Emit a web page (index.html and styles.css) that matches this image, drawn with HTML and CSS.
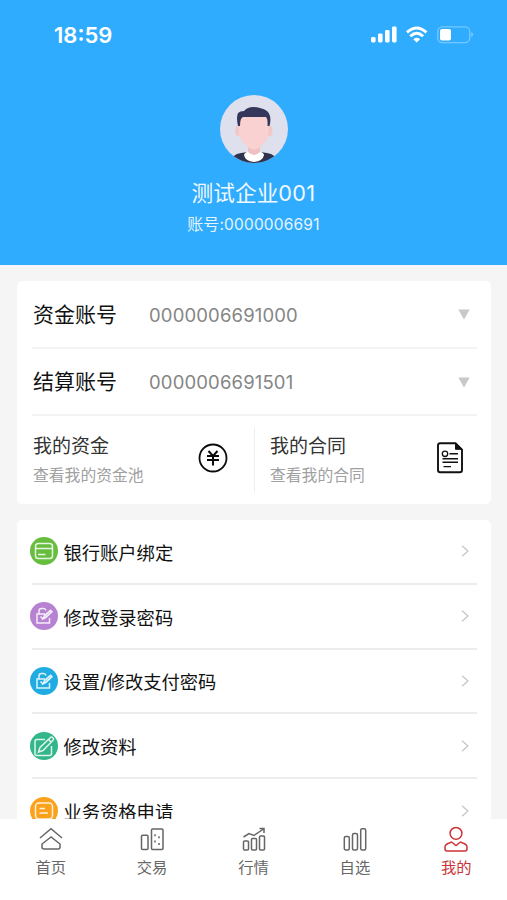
FILE: index.html
```html
<!DOCTYPE html>
<html lang="zh-CN">
<head>
<meta charset="utf-8">
<meta name="viewport" content="width=device-width, initial-scale=1">
<title>我的</title>
<link rel="stylesheet" href="styles.css">
</head>
<body>
<div class="app">
  <header class="profile">
    <div class="status">
      <span class="time">18:59</span>
      <svg class="status-icons" width="104" height="20" viewBox="0 0 104 20">
        <g fill="#fff">
          <rect x="1" y="12" width="4.6" height="5.500" rx="1.4"/>
          <rect x="8" y="8.500" width="4.6" height="9" rx="1.4"/>
          <rect x="15" y="5" width="4.6" height="12.5" rx="1.4"/>
          <rect x="22" y="1.500" width="4.6" height="16" rx="1.4"/>
          <path d="M46.700 17.500 L43.300 14.200 Q46.700 11.300 50.100 14.200 Z"/>
          <rect x="70" y="4" width="11" height="11.500" rx="2"/>
        </g>
        <g fill="none" stroke="#fff" stroke-width="2.900">
          <path d="M37 7.300 Q46.700 -1.200 56.400 7.300"/>
          <path d="M40.300 11.200 Q46.700 5.300 53.100 11.200"/>
        </g>
        <rect x="67.700" y="1.800" width="32" height="15.800" rx="4.500" fill="none" stroke="#74c7ff" stroke-width="1.300"/>
        <path d="M101.300 7 Q104.800 9.600 101.300 12.200 Z" fill="#83cdff"/>
      </svg>
    </div>
    <svg class="avatar" width="68" height="68" viewBox="0 0 68 68">
      <defs><clipPath id="face"><circle cx="34" cy="34" r="34"/></clipPath></defs>
      <g clip-path="url(#face)">
        <rect width="68" height="68" fill="#dfe0ee"/>
        <path d="M10 70 Q11 59 21 58 L28 57 L40 57 L47 58 Q57 59 58 70 Z" fill="#303350"/>
        <path d="M24 60 Q24 58 29 56 L39 56 Q44 58 44 60 Q43 66 34 67 Q25 66 24 60 Z" fill="#fff"/>
        <path d="M28 49 H40 V57 Q34 63 28 57 Z" fill="#f0bfc2"/>
        <ellipse cx="18" cy="36" rx="3" ry="5.500" fill="#f2c7c9"/>
        <ellipse cx="49.500" cy="36" rx="3" ry="5.500" fill="#f2c7c9"/>
        <path d="M19 20 H48.500 V38 Q48 45 42 50 Q34 59 26 50 Q19 45 19 38 Z" fill="#f9d1d1"/>
        <path d="M18 31 Q16 22 18 18 Q20 16 24 16 Q29 10 40 13 Q49 15 50 21 Q51 26 49.500 31 L47.500 31 Q48 24 46 22 H23 Q20 23 20 31 Z" fill="#34375a"/>
      </g>
    </svg>
    <h1 class="name">测试企业<span class="name-no">001</span></h1>
    <p class="account">账号<span class="account-no">:0000006691</span></p>
  </header>

  <main class="content">
    <section class="card">
      <div class="select-row">
        <span class="label">资金账号</span>
        <span class="value">0000006691000</span>
        <svg class="caret" width="12" height="11" viewBox="0 0 12 11"><path d="M.3.500H11.700L6 10.500Z"/></svg>
      </div>
      <div class="select-row">
        <span class="label">结算账号</span>
        <span class="value">0000006691501</span>
        <svg class="caret" width="12" height="11" viewBox="0 0 12 11"><path d="M.3.500H11.700L6 10.500Z"/></svg>
      </div>
      <div class="shortcuts">
        <div class="shortcut">
          <div><div class="title">我的资金</div><div class="hint">查看我的资金池</div></div>
          <svg width="30" height="30" viewBox="0 0 30 30" fill="none" stroke="#0b0b0b">
            <circle cx="15" cy="15" r="13.500" stroke-width="1.800"/>
            <path d="M10.500 8 L15 13 L19.500 8 M9 13 H21 M9 17 H21 M15 13 V22.500" stroke-width="2"/>
          </svg>
        </div>
        <div class="shortcut">
          <div><div class="title">我的合同</div><div class="hint">查看我的合同</div></div>
          <svg width="26" height="32" viewBox="0 0 26 32" fill="none" stroke="#111">
            <path d="M18.500 1.200 H3.200 Q1 1.200 1 3.400 V28 Q1 30.300 3.200 30.300 H22.700 Q25 30.300 25 28 V7.700 Z" stroke-width="1.900"/>
            <path d="M18.500 1.200 V7.300 H25 Z" fill="#111"/>
            <circle cx="8" cy="11.800" r="2.700" stroke-width="1.300"/>
            <path d="M12.500 11.800 H21 M5.500 16.800 H21 M5.500 20.300 H21 M6.500 24.600 H14" stroke-width="1.400"/>
          </svg>
        </div>
      </div>
    </section>

    <section class="card menu">
      <div class="item">
        <svg class="badge green" viewBox="0 0 28 28"><rect x="5.500" y="6.500" width="17" height="15" rx="2.800"/><path d="M5.500 11.500H22.500M8 17.500H15.500"/></svg>
        <span>银行账户绑定</span>
        <svg class="arrow" viewBox="0 0 8 12"><path d="M1 .7L7 6L1 11.300"/></svg>
      </div>
      <div class="item">
        <svg class="badge purple" viewBox="0 0 28 28"><path d="M15 12H7V21H19.500V16M9 12V9Q9 6.500 11.500 6.500H13.500Q15.500 6.500 16 8.500M10.500 14.500L13 17"/><path d="M13 17L14.500 13.500L20.500 8.200L22 9.700L16 15.500Z" fill="#fff" fill-opacity=".5"/></svg>
        <span>修改登录密码</span>
        <svg class="arrow" viewBox="0 0 8 12"><path d="M1 .7L7 6L1 11.300"/></svg>
      </div>
      <div class="item">
        <svg class="badge blue" viewBox="0 0 28 28"><path d="M15 12H7V21H19.500V16M9 12V9Q9 6.500 11.500 6.500H13.500Q15.500 6.500 16 8.500M10.500 14.500L13 17"/><path d="M13 17L14.500 13.500L20.500 8.200L22 9.700L16 15.500Z" fill="#fff" fill-opacity=".5"/></svg>
        <span>设置/修改支付密码</span>
        <svg class="arrow" viewBox="0 0 8 12"><path d="M1 .7L7 6L1 11.300"/></svg>
      </div>
      <div class="item">
        <svg class="badge teal" viewBox="0 0 28 28"><path d="M15 7.500H7Q5 7.500 5 9.500V21.500Q5 23.500 7 23.500H19.500Q21.500 23.500 21.500 21.500V14M8.500 20L10 15.500L20.500 5.500Q21.500 4.500 22.500 5.500L23.300 6.300Q24 7.300 23 8.300L13 18.500ZM18.500 7.500L21 10"/></svg>
        <span>修改资料</span>
        <svg class="arrow" viewBox="0 0 8 12"><path d="M1 .7L7 6L1 11.300"/></svg>
      </div>
      <div class="item">
        <svg class="badge orange" viewBox="0 0 28 28"><rect x="5.500" y="6" width="17" height="16" rx="3.500"/><path d="M9.500 11.500H15M9.500 16H18"/></svg>
        <span>业务资格申请</span>
        <svg class="arrow" viewBox="0 0 8 12"><path d="M1 .7L7 6L1 11.300"/></svg>
      </div>
    </section>
  </main>

  <nav class="tabs">
    <div class="tab">
      <svg viewBox="0 0 26 28"><path d="M2 12L13 2.700L24 12M13 11L4 18V21Q4 23 6 23H20Q22 23 22 21V18Z"/></svg>
      <span>首页</span>
    </div>
    <div class="tab">
      <svg viewBox="0 0 26 28"><rect x="2.500" y="9.200" width="6.500" height="14.300" rx="1"/><rect x="12.500" y="3" width="11.500" height="20.500" rx="1"/><path d="M16 8.300V10.300M20 10.300V12.300M16 14.500V16.500M20 17V19"/></svg>
      <span>交易</span>
    </div>
    <div class="tab">
      <svg viewBox="0 0 26 28"><rect x="2.500" y="15" width="5" height="9" rx="1"/><rect x="10.500" y="12.500" width="5" height="11.500" rx="1"/><rect x="18.500" y="10" width="5" height="14" rx="1"/><path d="M2.500 11L8 7.500L13 9.500L22.500 3M18.500 2.500H23V7"/></svg>
      <span>行情</span>
    </div>
    <div class="tab">
      <svg viewBox="0 0 26 28"><rect x="2.300" y="10.500" width="5" height="13.500" rx="1.500"/><rect x="10.500" y="7.500" width="5" height="16.500" rx="1.500"/><rect x="18.700" y="2.700" width="5" height="21.300" rx="1.500"/></svg>
      <span>自选</span>
    </div>
    <div class="tab active">
      <svg viewBox="0 0 26 28"><circle cx="13" cy="7.300" r="5.900"/><path d="M8.500 16L13 19.500L17.500 16L22 18Q24 19 24 21V23Q24 25 22 25H4Q2 25 2 23V21Q2 19 4 18Z"/></svg>
      <span>我的</span>
    </div>
  </nav>
</div>
</body>
</html>
```
FILE: styles.css
```css
* { box-sizing: border-box; }

body {
  margin: 0;
  background: #f5f5f5;
  color: #111;
  font-family: Inter, "Noto Sans CJK SC", sans-serif;
}

svg { display: block; flex: none; }

.app {
  display: flex;
  flex-direction: column;
  height: 900px;
  overflow: hidden;
}

.profile {
  display: flex;
  flex-direction: column;
  align-items: center;
  flex: none;
  height: 265px;
  background: #30acff;
  color: #fff;
}

.status {
  display: flex;
  justify-content: space-between;
  align-items: center;
  width: 100%;
  height: 69px;
  padding: 0 33px 0 54px;
}

.time { font-size: 22px; font-weight: 600; }

.avatar { margin-top: 26px; }

.name {
  margin: 15px 0 0;
  font-size: 21.700px;
  line-height: 30px;
  font-weight: 400;
  opacity: .93;
}

.name-no { letter-spacing: .3px; }

.account {
  margin: 4px 0 0;
  font-size: 16px;
  line-height: 24px;
  opacity: .88;
}

.account-no { font-size: 15.500px; letter-spacing: .18px; }

.content {
  display: flex;
  flex-direction: column;
  gap: 16px;
  flex: 1;
  min-height: 0;
  padding: 16px 16px 0 17px;
  overflow: hidden;
}

.card {
  flex: none;
  padding: 0 14px 0 15px;
  border-radius: 5px;
  background: #fff;
}

.select-row {
  display: flex;
  align-items: center;
  height: 67.500px;
  padding: 2px 7px 0 1px;
  border-bottom: 2px solid #f3f3f3;
}

.label { width: 116px; font-size: 21px; line-height: 30px; }

.value { flex: 1; color: #858585; font-size: 18.500px; letter-spacing: .15px; }

.caret { fill: #c8c8c8; }

.shortcuts { display: flex; height: 88px; padding: 12px 0; }

.shortcut {
  display: flex;
  align-items: center;
  justify-content: space-between;
  width: 222px;
  padding: 0 26px 4px 1px;
}

.shortcut + .shortcut {
  width: 223px;
  padding: 0 14px 4px 15px;
  border-left: 1px solid #eee;
}

.title { padding-top: 5px; color: #333; font-size: 19px; line-height: 30px; }

.hint { color: #a0a0a0; font-size: 15.800px; line-height: 28px; }

.item {
  display: flex;
  align-items: center;
  height: 64.800px;
  padding: 0 8px 0 0;
  border-bottom: 2px solid #ececec;
  font-size: 18.300px;
  line-height: 28px;
}

.item span { flex: 1; margin-left: 5.500px; padding-top: 3px; }

.badge {
  width: 28px;
  height: 28px;
  margin-left: -2px;
  border-radius: 50%;
  fill: none;
  stroke: #fff;
  stroke-opacity: .85;
  stroke-width: 1.500;
}

.green { background: #67bd3d; }
.purple { background: #b782d1; }
.blue { background: #20ace3; }
.teal { background: #32b68a; }
.orange { background: #faa21b; }

.arrow { width: 8px; height: 12px; fill: none; stroke: #c4c4c4; stroke-width: 1.200; }

.tabs {
  display: flex;
  flex: none;
  height: 81px;
  padding-top: 7px;
  background: #fff;
}

.tab {
  display: flex;
  flex-direction: column;
  align-items: center;
  flex: 1;
  color: #666;
  font-size: 15.300px;
  line-height: 24px;
}

.tab svg { width: 26px; height: 28px; margin-bottom: 2px; fill: none; stroke: currentColor; stroke-width: 1.500; }

.active { color: #cb3438; }
```
